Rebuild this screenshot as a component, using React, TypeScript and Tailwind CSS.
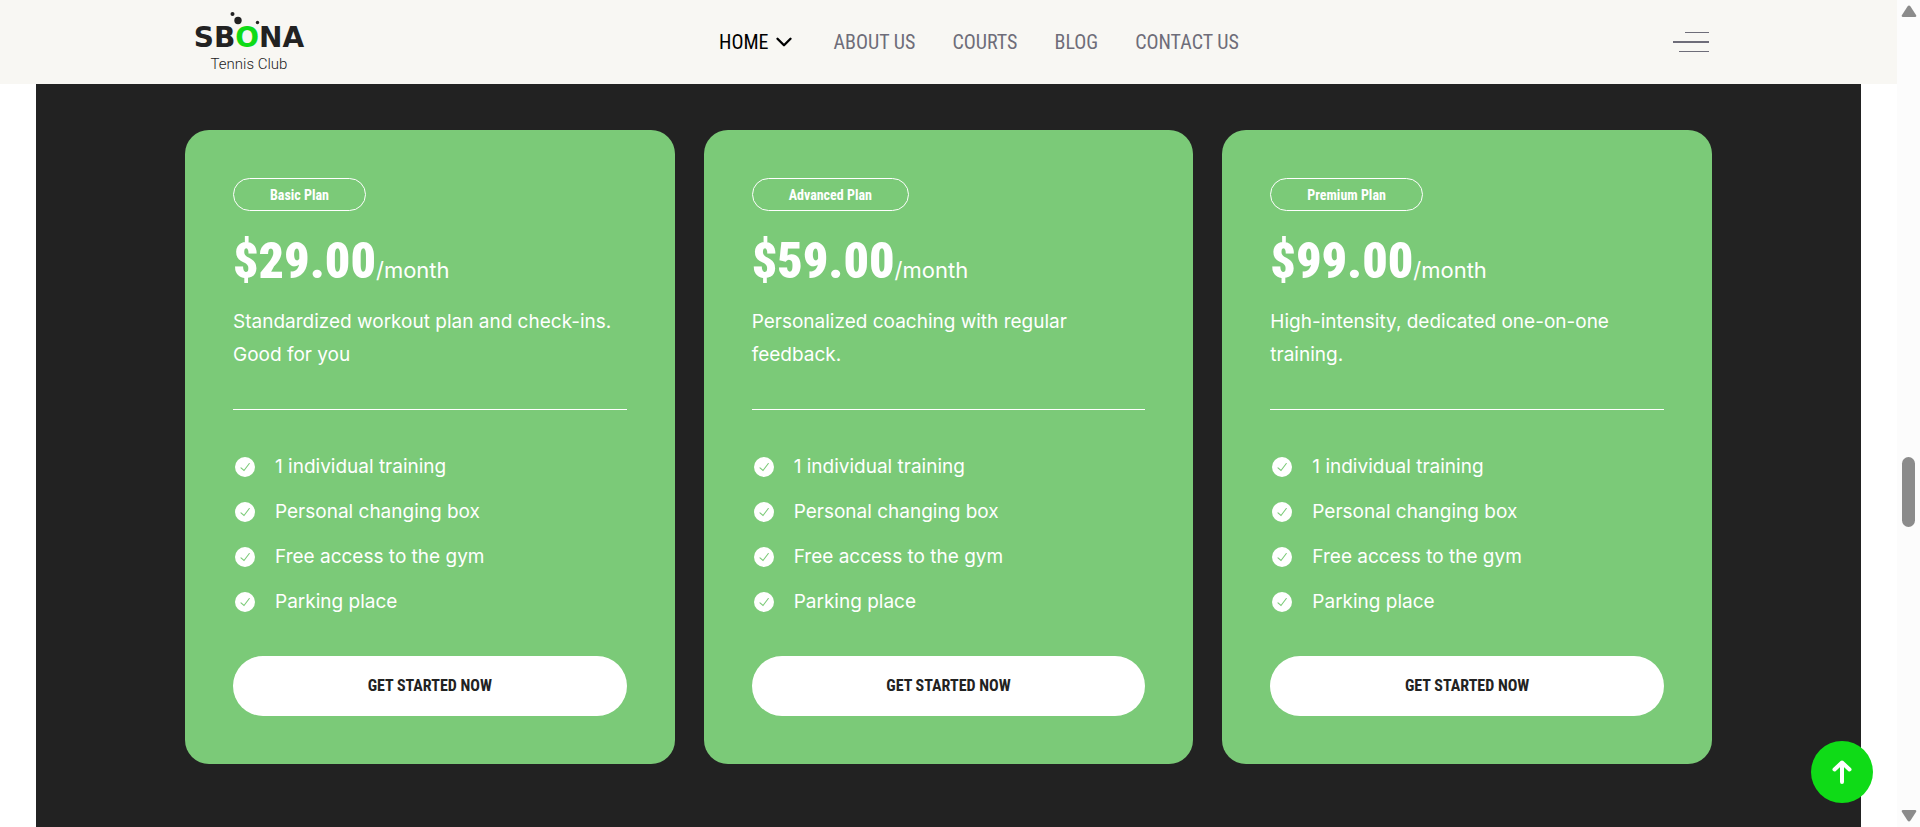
import { ChevronDown } from "lucide-react";

type Plan = {
  name: string;
  price: string;
  description: string;
};

const plans: Plan[] = [
  {
    name: "Basic Plan",
    price: "$29.00",
    description: "Standardized workout plan and check-ins. Good for you",
  },
  {
    name: "Advanced Plan",
    price: "$59.00",
    description: "Personalized coaching with regular feedback.",
  },
  {
    name: "Premium Plan",
    price: "$99.00",
    description: "High-intensity, dedicated one-on-one training.",
  },
];

const features = [
  "1 individual training",
  "Personal changing box",
  "Free access to the gym",
  "Parking place",
];

const links = ["About Us", "Courts", "Blog", "Contact Us"];

function Logo() {
  return (
    <a href="#" className="relative flex w-[112px] flex-col items-center pt-[20px] text-[#222]">
      <svg
        viewBox="0 0 112 20"
        className="absolute left-0 top-[8px] h-5 w-28"
        fill="currentColor"
        aria-hidden="true"
      >
        <circle cx="39.5" cy="6" r="2" />
        <circle cx="45" cy="12.5" r="3.7" />
        <circle cx="64.5" cy="14.5" r="1.7" />
      </svg>
      <span className="font-['DejaVu_Sans',sans-serif] text-[28px] font-bold leading-[36px]">
        SB<span className="text-[#0fdb17]">O</span>NA
      </span>
      <span className="font-['Roboto',sans-serif] text-[15px] font-light leading-[16px]">Tennis Club</span>
    </a>
  );
}

function Header() {
  return (
    <header className="grid h-[84px] grid-cols-[1fr_auto_1fr] items-start bg-[#f8f7f3] pl-[193px] pr-[188px]">
      <Logo />
      <nav className="ml-14 flex h-[84px] items-center gap-[37px] font-['Roboto_Condensed',sans-serif] text-[20px] uppercase leading-6 text-[#6e6d79]">
        <a href="#" className="flex items-center gap-0.5 text-black">
          Home
          <ChevronDown className="size-[26px]" strokeWidth={2.2} />
        </a>
        {links.map((link) => (
          <a key={link} href="#">
            {link}
          </a>
        ))}
      </nav>
      <button
        type="button"
        aria-label="Open menu"
        className="flex h-[84px] flex-col items-end justify-center gap-2 justify-self-end"
      >
        <span className="h-px w-6 bg-[#6e6d79]" />
        <span className="h-0.5 w-9 bg-[#6e6d79]" />
        <span className="h-px w-[30px] bg-[#6e6d79]" />
      </button>
    </header>
  );
}

function CheckIcon() {
  return (
    <svg viewBox="0 0 20 20" className="size-5 shrink-0" fill="none" aria-hidden="true">
      <circle cx="10" cy="10" r="10" fill="#fff" />
      <path d="M6 10.8 L9 13.5 L14.3 6.5" stroke="#7bca78" strokeWidth="1.1" strokeLinecap="round" />
    </svg>
  );
}

function PlanCard({ plan }: { plan: Plan }) {
  return (
    <article className="flex flex-col rounded-3xl bg-[#7bca78] p-12 text-white">
      <h3 className="flex h-[33px] items-center self-start rounded-full border border-white px-9 font-['Roboto_Condensed',sans-serif] text-sm font-bold">
        {plan.name}
      </h3>
      <p className="mt-5 flex h-[60px] items-baseline leading-[60px]">
        <span className="font-['Roboto_Condensed',sans-serif] text-[50px] font-black">
          {plan.price}
        </span>
        <span className="text-[22px]">/month</span>
      </p>
      <p className="mt-3.5 min-h-[66px] text-[19px] leading-[33px]">{plan.description}</p>
      <hr className="mt-[38px] border-white" />
      <ul className="mt-10 flex flex-col gap-3 text-[19px] leading-[33px]">
        {features.map((feature) => (
          <li key={feature} className="flex items-center gap-5 pl-0.5">
            <CheckIcon />
            {feature}
          </li>
        ))}
      </ul>
      <button
        type="button"
        className="mt-[38px] h-[60px] rounded-full bg-white font-['Roboto_Condensed',sans-serif] text-base font-bold uppercase text-[#222]"
      >
        Get Started Now
      </button>
    </article>
  );
}

function ScrollRail() {
  return (
    <div className="flex w-[23px] flex-col items-center bg-[#fcfcfc] py-[5px] text-[#8b8b8b]" aria-hidden="true">
      <svg viewBox="0 0 16 12" className="h-3 w-4" fill="currentColor">
        <path d="M2 12 Q0 12 1 10 L6.5 1.5 Q8 -.5 9.5 1.5 L15 10 Q16 12 14 12 Z" />
      </svg>
      <div className="flex w-full flex-1 flex-col items-center">
        <div className="grow-[440]" />
        <div className="h-[70px] w-[13px] rounded-full bg-[#8b8b8b]" />
        <div className="grow-[283]" />
      </div>
      <svg viewBox="0 0 16 12" className="h-3 w-4" fill="currentColor">
        <path d="M2 0 Q0 0 1 2 L6.5 10.5 Q8 12.5 9.5 10.5 L15 2 Q16 0 14 0 Z" />
      </svg>
    </div>
  );
}

export default function App() {
  return (
    <div className="flex h-screen overflow-hidden bg-white font-['Inter',sans-serif]">
      <div className="flex min-w-0 flex-1 flex-col">
        <Header />
        <main className="mx-9 flex-1 bg-[#222] px-[149px] pt-[46px]">
          <section className="grid grid-cols-3 gap-[29px]">
            {plans.map((plan) => (
              <PlanCard key={plan.name} plan={plan} />
            ))}
          </section>
        </main>
      </div>
      <ScrollRail />
      <button
        type="button"
        aria-label="Back to top"
        className="fixed bottom-6 right-[47px] flex size-[62px] items-center justify-center rounded-full bg-[#0fdb17] text-white"
      >
        <svg
          viewBox="0 0 20 24"
          className="h-6 w-5"
          fill="none"
          stroke="currentColor"
          strokeWidth="4"
          strokeLinecap="round"
          strokeLinejoin="round"
          aria-hidden="true"
        >
          <path d="M10 22V2.5M2.5 9.5L10 2.5L17.5 9.5" />
        </svg>
      </button>
    </div>
  );
}
